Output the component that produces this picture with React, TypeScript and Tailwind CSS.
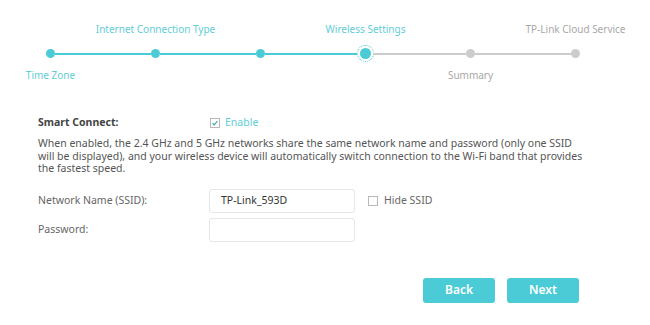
import React from "react";

function StepDot({ state }: { state: "done" | "current" | "todo" }) {
  if (state === "current") {
    return (
      <div className="w-[17px] h-[17px] rounded-full border border-dotted border-[#4acbd6] flex items-center justify-center shrink-0">
        <div className="w-[11px] h-[11px] rounded-full bg-[#4acbd6]" />
      </div>
    );
  }
  return (
    <div
      className={
        "w-[9px] h-[9px] rounded-full shrink-0 " +
        (state === "done" ? "bg-[#4acbd6]" : "bg-[#cccccc]")
      }
    />
  );
}

const steps = [
  { top: "", bottom: "Time Zone", state: "done" as const },
  { top: "Internet Connection Type", bottom: "", state: "done" as const },
  { top: "", bottom: "", state: "done" as const },
  { top: "Wireless Settings", bottom: "", state: "current" as const },
  { top: "", bottom: "Summary", state: "todo" as const },
  { top: "TP-Link Cloud Service", bottom: "", state: "todo" as const },
];

function Check({ checked }: { checked: boolean }) {
  return (
    <span className="w-[10px] h-[10px] border border-[#b8b8b8] bg-white flex items-center justify-center shrink-0">
      {checked && (
        <svg width="8" height="8" viewBox="0 0 8 8">
          <path d="M1.5 4.2 L3.2 5.8 L6.5 2.2" fill="none" stroke="#4aa8b3" strokeWidth="1.2" />
        </svg>
      )}
    </span>
  );
}

export default function App() {
  return (
    <div
      className="w-[650px] h-[325px] bg-white text-[#555] overflow-hidden"
      style={{ fontFamily: '"Noto Sans", "DejaVu Sans", sans-serif' }}
    >
      {/* Stepper */}
      <div className="pt-[21px] ml-[-2px] grid grid-cols-[repeat(6,105px)]">
        {steps.map((s, i) => (
          <div key={"t" + i} className="h-[16px] flex justify-center">
            <span
              className={
                "whitespace-nowrap text-[10px] leading-[16px] " +
                (i <= 3 ? "text-[#5fcdd6]" : "text-[#a8a8a8]")
              }
            >
              {s.top}
            </span>
          </div>
        ))}
        {steps.map((s, i) => (
          <div key={"d" + i} className="mt-[8px] h-[17px] flex items-center">
            <div
              className={
                "flex-1 h-[2px] " +
                (i === 0 ? "" : i <= 3 ? "bg-[#4acbd6]" : "bg-[#cccccc]")
              }
            />
            <StepDot state={s.state} />
            <div
              className={
                "flex-1 h-[2px] " +
                (i === 5 ? "" : i < 3 ? "bg-[#4acbd6]" : "bg-[#cccccc]")
              }
            />
          </div>
        ))}
        {steps.map((s, i) => (
          <div key={"b" + i} className="mt-[5px] h-[16px] flex justify-center">
            <span
              className={
                "whitespace-nowrap text-[10px] leading-[16px] " +
                (i <= 3 ? "text-[#5fcdd6]" : "text-[#a8a8a8]")
              }
            >
              {s.bottom}
            </span>
          </div>
        ))}
      </div>

      {/* Form */}
      <div className="pl-[38px] pt-[32px] text-[10.5px]">
        <div className="flex items-center h-[16px]">
          <div className="w-[172px] font-bold text-[#444]">Smart Connect:</div>
          <div className="flex items-center gap-[5px]">
            <Check checked />
            <span className="text-[#5fcdd6]">Enable</span>
          </div>
        </div>
        <p className="mt-[6px] leading-[12.5px] text-[#555] whitespace-nowrap">
          When enabled, the 2.4 GHz and 5 GHz networks share the same network name and password (only one SSID
          <br />
          will be displayed), and your wireless device will automatically switch connection to the Wi-Fi band that provides
          <br />
          the fastest speed.
        </p>

        <div className="mt-[14px] flex items-center">
          <div className="w-[171px] text-[#666]">Network Name (SSID):</div>
          <div className="w-[146px] h-[24px] border border-[#e6e6e6] rounded-[3px] flex items-center pl-[11px] text-[#333]">
            TP-Link_593D
          </div>
          <div className="ml-[13px] flex items-center gap-[6px] text-[#666]">
            <Check checked={false} />
            <span>Hide SSID</span>
          </div>
        </div>
        <div className="mt-[5px] flex items-center">
          <div className="w-[171px] text-[#666]">Password:</div>
          <div className="w-[146px] h-[24px] border border-[#e6e6e6] rounded-[3px]" />
        </div>
      </div>

      {/* Buttons */}
      <div className="mt-[36px] flex justify-end gap-[12px] pr-[71px]">
        <button className="w-[72px] h-[25px] rounded-[3px] bg-[#4acbd6] text-white text-[12px] font-semibold">
          Back
        </button>
        <button className="w-[72px] h-[25px] rounded-[3px] bg-[#4acbd6] text-white text-[12px] font-semibold">
          Next
        </button>
      </div>
    </div>
  );
}
